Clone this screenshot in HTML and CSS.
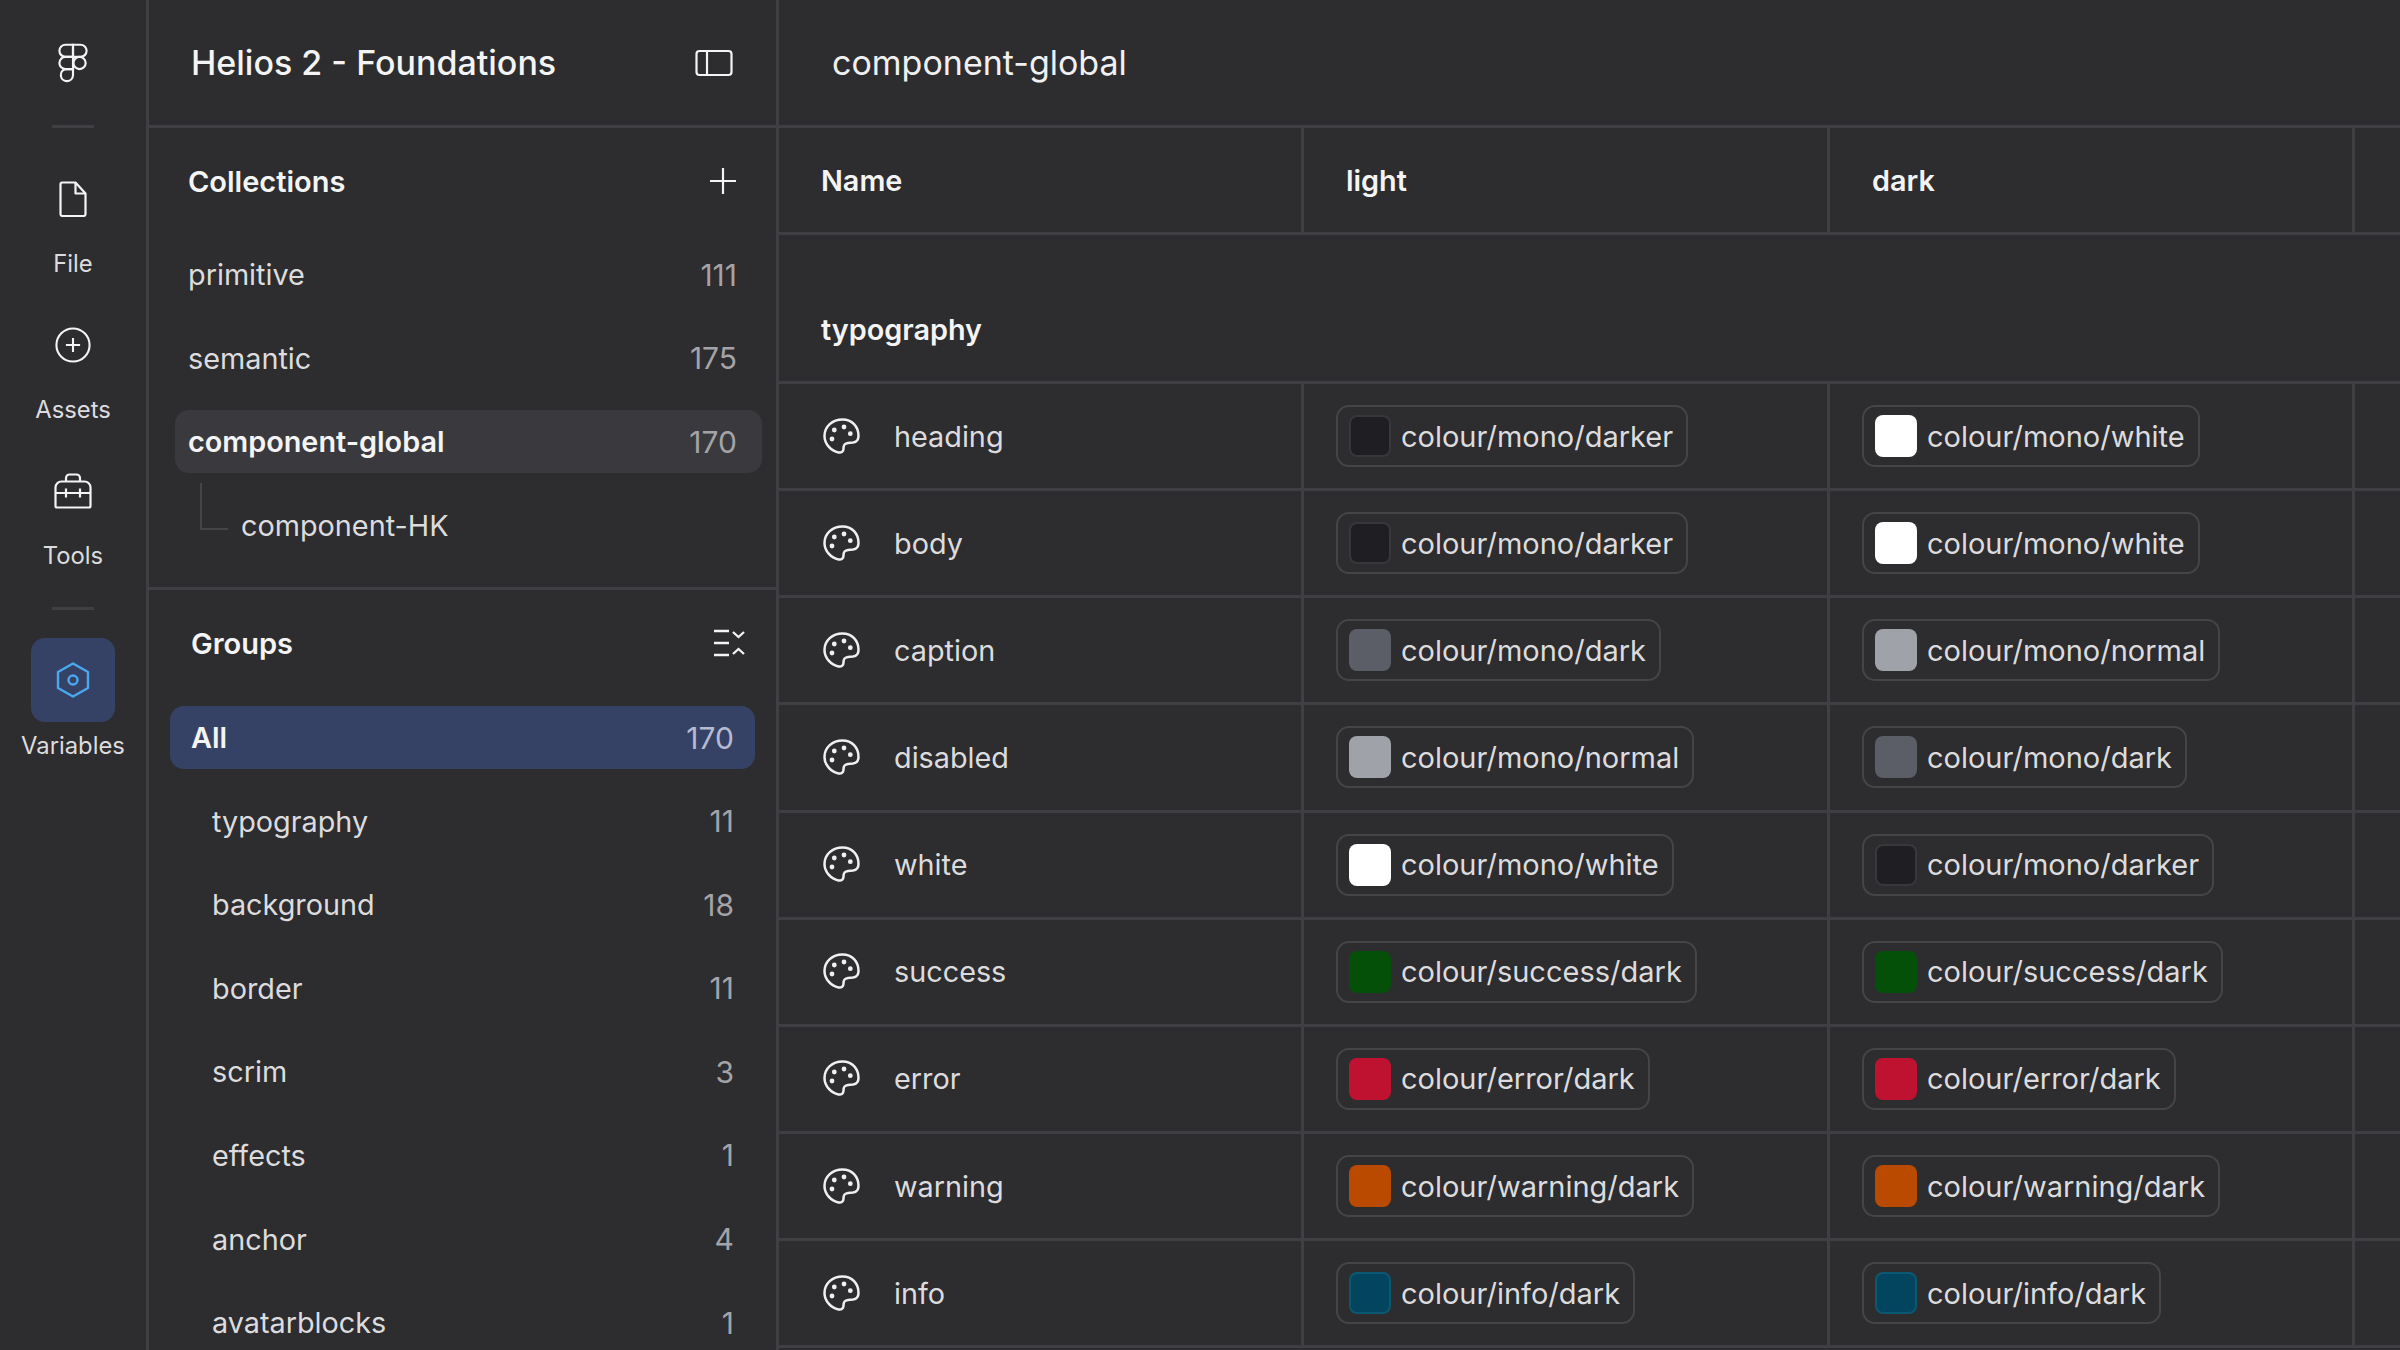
FILE: index.html
```html
<!DOCTYPE html>
<html lang="en">
<head>
    <meta charset="UTF-8">
    <title>Helios 2 - Foundations</title>
    <link rel="stylesheet" href="styles.css">
</head>
<body>
    <svg class="sprite" width="0" height="0">
        <symbol id="palette" viewBox="0 0 37 37">
            <path d="M19.500 1.500C9.500 1.500 1.500 8.500 1.500 18 1.500 26 8 33 15.500 34.500 18.500 35 20.500 33.500 20.500 30.500 20.500 27.500 21 25.500 25 25L30 24.500C33.500 24 35.500 21.500 35.500 18 35.500 8.500 29 1.500 19.500 1.500Z" fill="none" stroke="currentColor" stroke-width="2.500" stroke-linejoin="round"/>
            <circle cx="11.300" cy="12" r="2.400" fill="currentColor"/>
            <circle cx="21" cy="9" r="2.400" fill="currentColor"/>
            <circle cx="27.300" cy="15.700" r="2.400" fill="currentColor"/>
            <circle cx="9" cy="21" r="2.400" fill="currentColor"/>
        </symbol>
    </svg>

    <div class="app">
        <nav class="rail">
            <div class="rail-logo">
                <svg width="30" height="40" viewBox="0 0 32 42" fill="none" stroke="currentColor" stroke-width="2.300">
                    <path d="M16 1.500H8a6.500 6.500 0 0 0 0 13h8Z"/>
                    <path d="M16 1.500h8a6.500 6.500 0 0 1 0 13h-8Z"/>
                    <path d="M16 14.500H8a6.500 6.500 0 0 0 0 13h8Z"/>
                    <circle cx="23" cy="21" r="6.500"/>
                    <path d="M16 27.500H8a6.500 6.500 0 1 0 8 6.500Z"/>
                </svg>
            </div>
            <div class="rail-item">
                <svg width="28" height="36" viewBox="0 0 28 36" fill="none" stroke="currentColor" stroke-width="2.200" stroke-linejoin="round">
                    <path d="M3 1.500h13.500l10 11v20.500a2 2 0 0 1-2 2H3.500a2 2 0 0 1-2-2V3A1.500 1.500 0 0 1 3 1.500Z"/>
                    <path d="M16.500 1.500V12.500h10"/>
                </svg>
                <span>File</span>
            </div>
            <div class="rail-item">
                <svg width="38" height="36" viewBox="0 0 38 38" fill="none" stroke="currentColor" stroke-width="2.200">
                    <circle cx="19" cy="19" r="17.500"/>
                    <path d="M19 11.500v15M11.500 19h15"/>
                </svg>
                <span>Assets</span>
            </div>
            <div class="rail-item tools-item">
                <svg width="38" height="36" viewBox="0 0 38 36" fill="none" stroke="currentColor" stroke-width="2.200" stroke-linejoin="round">
                    <path d="M3 34.500h32a1.500 1.500 0 0 0 1.500-1.500V14.500a6 6 0 0 0-6-6h-23a6 6 0 0 0-6 6V33A1.500 1.500 0 0 0 3 34.500Z"/>
                    <path d="M12 8.500V5a3.500 3.500 0 0 1 3.500-3.500h7A3.500 3.500 0 0 1 26 5v3.500"/>
                    <path d="M1.500 20h35M12 15.500v9M26 15.500v9"/>
                </svg>
                <span>Tools</span>
            </div>
            <div class="rail-rule"></div>
            <div class="rail-item variables-item">
                <div class="rail-active">
                    <svg width="34" height="36" viewBox="0 0 34 36" fill="none" stroke="currentColor" stroke-width="2.400" stroke-linejoin="round">
                        <path d="M17 1.500 32 10v16l-15 8.500L2 26V10Z"/>
                        <circle cx="17" cy="18" r="4.500"/>
                    </svg>
                </div>
                <span>Variables</span>
            </div>
        </nav>

        <aside class="sidebar">
            <header class="side-title">
                <h1>Helios 2 - Foundations</h1>
                <svg width="38" height="28" viewBox="0 0 38 28" fill="none" stroke="currentColor" stroke-width="2.200">
                    <rect x="1.500" y="2" width="35" height="24" rx="3"/>
                    <path d="M12 2v24"/>
                </svg>
            </header>

            <section class="collections">
                <div class="section-head">
                    <h2>Collections</h2>
                    <svg width="26" height="26" viewBox="0 0 26 26" fill="none" stroke="currentColor" stroke-width="2.200">
                        <path d="M13 0v26M0 13h26"/>
                    </svg>
                </div>
                <ul class="list">
                    <li>primitive<span class="count">111</span></li>
                    <li>semantic<span class="count">175</span></li>
                    <li class="current">component-global<span class="count">170</span></li>
                    <li class="child">component-HK</li>
                </ul>
            </section>

            <section class="groups">
                <div class="section-head">
                    <h2>Groups</h2>
                    <svg width="32" height="28" viewBox="0 0 32 28" fill="none" stroke="currentColor" stroke-width="2.300">
                        <path d="M1 2h15M1 14h15M1 26h15"/>
                        <path d="M20 3l5.500 5 5.500-5M20 25l5.500-5 5.500 5"/>
                    </svg>
                </div>
                <ul class="list group-list">
                    <li class="selected">All<span class="count">170</span></li>
                    <li>typography<span class="count">11</span></li>
                    <li>background<span class="count">18</span></li>
                    <li>border<span class="count">11</span></li>
                    <li>scrim<span class="count">3</span></li>
                    <li>effects<span class="count">1</span></li>
                    <li>anchor<span class="count">4</span></li>
                    <li>avatarblocks<span class="count">1</span></li>
                </ul>
            </section>
        </aside>

        <main class="main">
            <header class="main-title">component-global</header>
            <div class="table-row table-head">
                <div class="cell">Name</div>
                <div class="cell">light</div>
                <div class="cell">dark</div>
                <div class="cell"></div>
            </div>
            <div class="group-row">typography</div>

            <div class="table-row">
                <div class="cell name"><svg class="palette"><use href="#palette"/></svg>heading</div>
                <div class="cell"><div class="chip"><i class="swatch darker"></i>colour/mono/darker</div></div>
                <div class="cell"><div class="chip"><i class="swatch white"></i>colour/mono/white</div></div>
                <div class="cell"></div>
            </div>
            <div class="table-row">
                <div class="cell name"><svg class="palette"><use href="#palette"/></svg>body</div>
                <div class="cell"><div class="chip"><i class="swatch darker"></i>colour/mono/darker</div></div>
                <div class="cell"><div class="chip"><i class="swatch white"></i>colour/mono/white</div></div>
                <div class="cell"></div>
            </div>
            <div class="table-row">
                <div class="cell name"><svg class="palette"><use href="#palette"/></svg>caption</div>
                <div class="cell"><div class="chip"><i class="swatch dark"></i>colour/mono/dark</div></div>
                <div class="cell"><div class="chip"><i class="swatch normal"></i>colour/mono/normal</div></div>
                <div class="cell"></div>
            </div>
            <div class="table-row">
                <div class="cell name"><svg class="palette"><use href="#palette"/></svg>disabled</div>
                <div class="cell"><div class="chip"><i class="swatch normal"></i>colour/mono/normal</div></div>
                <div class="cell"><div class="chip"><i class="swatch dark"></i>colour/mono/dark</div></div>
                <div class="cell"></div>
            </div>
            <div class="table-row">
                <div class="cell name"><svg class="palette"><use href="#palette"/></svg>white</div>
                <div class="cell"><div class="chip"><i class="swatch white"></i>colour/mono/white</div></div>
                <div class="cell"><div class="chip"><i class="swatch darker"></i>colour/mono/darker</div></div>
                <div class="cell"></div>
            </div>
            <div class="table-row">
                <div class="cell name"><svg class="palette"><use href="#palette"/></svg>success</div>
                <div class="cell"><div class="chip"><i class="swatch success"></i>colour/success/dark</div></div>
                <div class="cell"><div class="chip"><i class="swatch success"></i>colour/success/dark</div></div>
                <div class="cell"></div>
            </div>
            <div class="table-row">
                <div class="cell name"><svg class="palette"><use href="#palette"/></svg>error</div>
                <div class="cell"><div class="chip"><i class="swatch error"></i>colour/error/dark</div></div>
                <div class="cell"><div class="chip"><i class="swatch error"></i>colour/error/dark</div></div>
                <div class="cell"></div>
            </div>
            <div class="table-row">
                <div class="cell name"><svg class="palette"><use href="#palette"/></svg>warning</div>
                <div class="cell"><div class="chip"><i class="swatch warning"></i>colour/warning/dark</div></div>
                <div class="cell"><div class="chip"><i class="swatch warning"></i>colour/warning/dark</div></div>
                <div class="cell"></div>
            </div>
            <div class="table-row">
                <div class="cell name"><svg class="palette"><use href="#palette"/></svg>info</div>
                <div class="cell"><div class="chip"><i class="swatch info"></i>colour/info/dark</div></div>
                <div class="cell"><div class="chip"><i class="swatch info"></i>colour/info/dark</div></div>
                <div class="cell"></div>
            </div>
        </main>
    </div>
</body>
</html>
```

FILE: styles.css
```css
* { margin: 0; padding: 0; box-sizing: border-box; }
body {
    font-family: "Inter", "Liberation Sans", sans-serif;
    background: #2d2c2f;
    color: #e6e6e8;
    height: 1350px;
    overflow: hidden;
}
.sprite { position: absolute; }
.app {
    display: flex;
    height: 1350px;
}

/* left icon rail */
.rail {
    width: 149px;
    flex-shrink: 0;
    border-right: 3px solid #403f43;
    display: flex;
    flex-direction: column;
    align-items: center;
    color: #f4f4f5;
}
.rail-logo {
    width: 42px;
    height: 128px;
    padding-top: 43px;
    margin-bottom: 53px;
    display: flex;
    justify-content: center;
    border-bottom: 3px solid #403f43;
}
.rail-item {
    height: 146px;
    display: flex;
    flex-direction: column;
    align-items: center;
    gap: 32px;
    font-size: 23.8px;
    color: #dcdcde;
}
.rail-item svg { color: #f4f4f5; flex-shrink: 0; }
.tools-item { height: 134px; }
.rail-rule {
    width: 42px;
    height: 3px;
    flex-shrink: 0;
    background: #403f43;
}
.variables-item { margin-top: 28px; gap: 9px; }
.rail-active {
    width: 84px;
    height: 84px;
    border-radius: 14px;
    background: #364265;
    display: flex;
    align-items: center;
    justify-content: center;
}
.rail-active svg { color: #4aa8f0; }

/* collections and groups */
.sidebar {
    width: 630px;
    flex-shrink: 0;
    border-right: 3px solid #403f43;
}
.side-title {
    height: 128px;
    padding: 0 43px 0 42px;
    display: flex;
    align-items: center;
    justify-content: space-between;
    border-bottom: 3px solid #403f43;
    color: #f4f4f5;
}
.side-title h1 {
    font-size: 34px;
    font-weight: 500;
}
.collections {
    height: 462px;
    border-bottom: 3px solid #403f43;
}
.section-head {
    height: 106px;
    display: flex;
    align-items: center;
    justify-content: space-between;
    color: #f4f4f5;
}
.collections .section-head { padding: 0 40px 0 39px; }
.groups .section-head { padding: 0 31px 0 42px; }
.section-head h2 {
    font-size: 29px;
    font-weight: 600;
}
.list {
    list-style: none;
    margin-top: 9px;
    display: flex;
    flex-direction: column;
    gap: 20.6px;
    padding: 0 14px 0 26px;
}
.list li {
    height: 63px;
    padding: 0 25px 0 13px;
    border-radius: 14px;
    display: flex;
    align-items: center;
    justify-content: space-between;
    font-size: 28.8px;
    color: #dcdcde;
}
.count {
    font-size: 30px;
    color: #a3a3a8;
}
.list .current {
    background: #3a393d;
    font-weight: 600;
    color: #f4f4f5;
}
.current .count { font-weight: 400; }
.list .child {
    position: relative;
    padding-left: 66px;
}
.child::before {
    content: "";
    position: absolute;
    left: 25px;
    top: -11px;
    width: 26px;
    height: 45px;
    border-left: 2px solid #454448;
    border-bottom: 2px solid #454448;
}
.group-list { margin-top: 10px; padding: 0 21px; }
.group-list li { padding: 0 21px; }
.group-list li:not(.selected) { padding-left: 42px; }
.list .selected {
    background: #364265;
    font-weight: 600;
    color: #f4f4f5;
}
.selected .count { font-weight: 400; color: #b4bbd0; }

/* variables table */
.main {
    flex: 1;
    min-width: 0;
}
.main-title {
    height: 128px;
    padding-left: 53px;
    display: flex;
    align-items: center;
    border-bottom: 3px solid #403f43;
    font-size: 34px;
    color: #f0f0f2;
}
.table-row {
    display: grid;
    grid-template-columns: 525px 526px 525px 1fr;
    height: 107.15px;
    border-bottom: 3px solid #403f43;
}
.cell {
    display: flex;
    align-items: center;
    padding-left: 32px;
    border-right: 3px solid #403f43;
    font-size: 28.8px;
    color: #dcdcde;
}
.cell:last-child { border-right: none; }
.table-head { height: 107px; }
.table-head .cell {
    padding-left: 42px;
    font-size: 28.8px;
    font-weight: 600;
    color: #f4f4f5;
}
.cell.name {
    padding-left: 44px;
    gap: 34px;
}
.palette {
    width: 37px;
    height: 37px;
    color: #f0f0f2;
}
.group-row {
    height: 149px;
    padding: 77px 0 0 42px;
    border-bottom: 3px solid #403f43;
    font-size: 28.8px;
    font-weight: 600;
    color: #f4f4f5;
}
.chip {
    height: 62px;
    padding: 0 13px 0 11px;
    display: flex;
    align-items: center;
    gap: 10px;
    border: 2px solid #454448;
    border-radius: 13px;
    font-size: 29px;
}
.swatch {
    width: 42px;
    height: 42px;
    border-radius: 8px;
    flex-shrink: 0;
}
.darker { background: #1f1e22; border: 2px solid #38373b; }
.white { background: #ffffff; }
.dark { background: #5b5e66; }
.normal { background: #a0a2a9; }
.success { background: #045008; }
.error { background: #be1230; }
.warning { background: #ba4a00; }
.info { background: #03445f; border: 2px solid #0b5873; }
```
